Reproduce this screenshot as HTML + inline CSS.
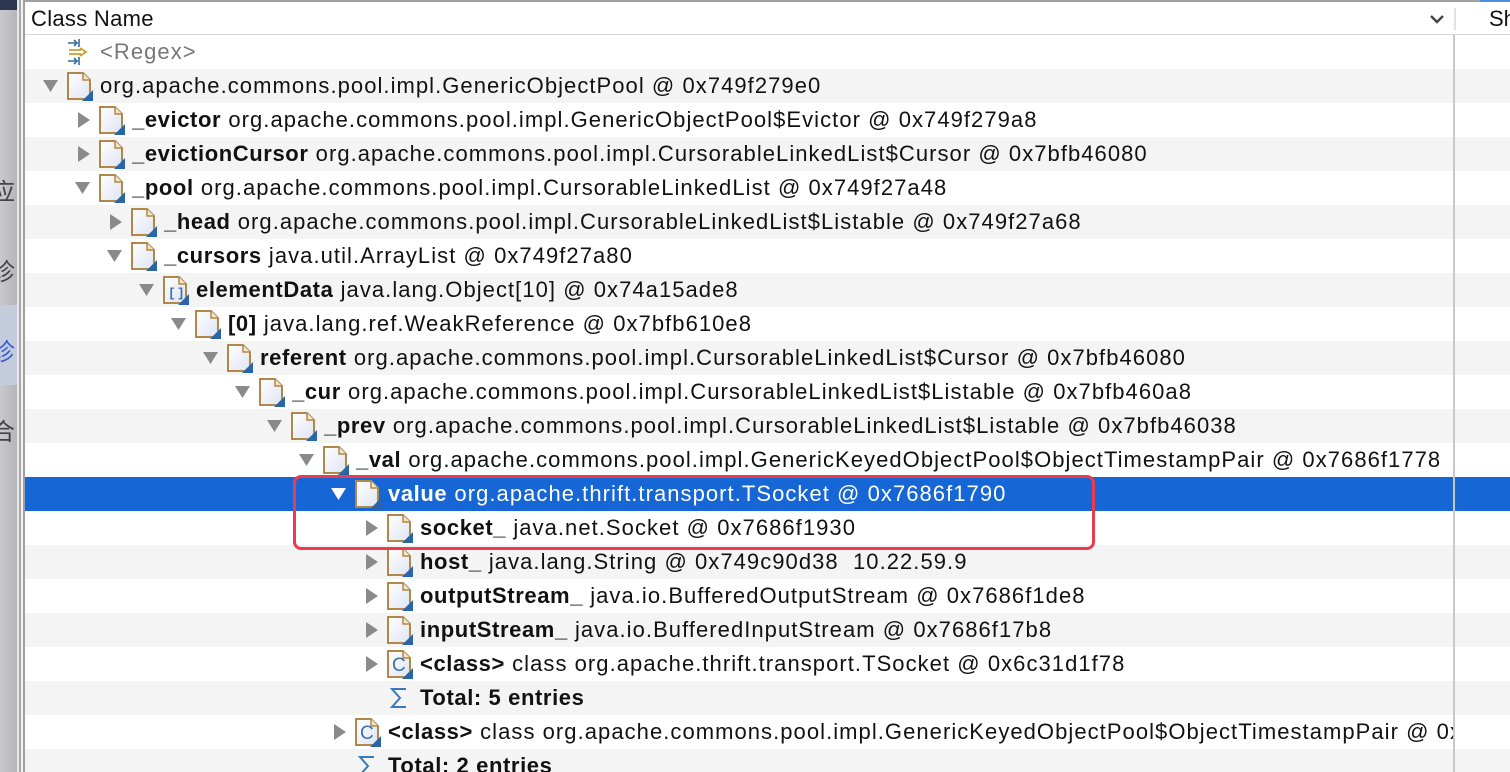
<!DOCTYPE html>
<html><head><meta charset="utf-8">
<style>
*{margin:0;padding:0;box-sizing:border-box}
html,body{width:1510px;height:772px;overflow:hidden}
body{background:#fff;font-family:"Liberation Sans",Arial,sans-serif;position:relative}
#strip{position:absolute;left:0;top:0;width:17px;height:772px;background:linear-gradient(90deg,#c9c9cd,#b6b6ba);overflow:hidden}
#strip .nav{position:absolute;left:0;top:0;width:17px;height:10px;background:#2b3652}
#strip span{position:absolute;left:-9px;font-size:24px;color:#444;font-family:"Noto Sans CJK SC",sans-serif}
#sep1{position:absolute;left:17px;top:0;width:2px;height:772px;background:#e8e8e8}
#sep2{position:absolute;left:19px;top:0;width:2px;height:772px;background:#a8a8a8}
#sep3{position:absolute;left:21px;top:0;width:2px;height:772px;background:#f2f2f2}
#sep4{position:absolute;left:23px;top:0;width:2px;height:772px;background:#a0a0a0}
#topline{position:absolute;left:25px;top:0;width:1485px;height:2px;background:#a0a0a0}
#header{position:absolute;left:25px;top:2px;width:1485px;height:33px;background:#fff;border-bottom:1px solid #d6d6d6}
#header .t{position:absolute;left:6px;top:4px;font-size:22px;letter-spacing:0.3px;color:#111}
#header .sh{position:absolute;left:1464px;top:4px;font-size:22px;color:#111}
#header .dv{position:absolute;left:1429px;top:6px;width:2px;height:22px;background:#e2e2e2}
.row{position:absolute;left:25px;width:1485px;height:34px;font-size:22px;letter-spacing:1.05px;line-height:34px;white-space:nowrap;color:#111;overflow:hidden}
.row.g{background:#f4f4f4}
.row.sel{background:#1766d6;color:#fff}
.row b{font-weight:bold;letter-spacing:0.6px}
.tri{position:absolute;top:0}
.ic{position:absolute;top:2px}
.tx{position:absolute;top:0;overflow:hidden}
#coldiv{position:absolute;left:1453px;top:35px;width:2px;height:737px;background:#c8c8c8}
#box{position:absolute;left:293px;top:475px;width:802px;height:75px;border:3px solid #ea3b4f;border-radius:8px}
</style></head><body>
<div id="strip"><div class="nav"></div>
<span style="top:172px">应</span><span style="top:252px">诊</span>
<div style="position:absolute;left:0;top:305px;width:17px;height:80px;background:#c4ccdc"></div>
<span style="top:332px;color:#3a5bd8">诊</span><span style="top:412px">合</span></div>
<div id="sep1"></div><div id="sep2"></div><div id="sep3"></div><div id="sep4"></div>
<div id="topline"></div>
<div style="position:absolute;left:1480px;top:0;width:30px;height:2px;background:#4a90e2"></div>
<div id="header"><div class="t">Class Name</div>
<svg style="position:absolute;left:1404px;top:12px" width="16" height="10"><path d="M2 2 L8 8 L14 2" stroke="#444" stroke-width="2.4" fill="none"/></svg>
<div class="dv"></div><div class="sh">Sh</div></div>
<div id="rows"></div>
<div id="coldiv"></div>
<div id="box"></div>
<script>
var D=[
[-1,'regex','','<span style="color:#777">&lt;Regex&gt;</span>'],
[0,'d','doc','org.apache.commons.pool.impl.GenericObjectPool @ 0x749f279e0'],
[1,'r','doc','<b>_evictor</b> org.apache.commons.pool.impl.GenericObjectPool$Evictor @ 0x749f279a8'],
[1,'r','doc','<b>_evictionCursor</b> org.apache.commons.pool.impl.CursorableLinkedList$Cursor @ 0x7bfb46080'],
[1,'d','doc','<b>_pool</b> org.apache.commons.pool.impl.CursorableLinkedList @ 0x749f27a48'],
[2,'r','doc','<b>_head</b> org.apache.commons.pool.impl.CursorableLinkedList$Listable @ 0x749f27a68'],
[2,'d','doc','<b>_cursors</b> java.util.ArrayList @ 0x749f27a80'],
[3,'d','arr','<b>elementData</b> java.lang.Object[10] @ 0x74a15ade8'],
[4,'d','doc','<b>[0]</b> java.lang.ref.WeakReference @ 0x7bfb610e8'],
[5,'d','doc','<b>referent</b> org.apache.commons.pool.impl.CursorableLinkedList$Cursor @ 0x7bfb46080'],
[6,'d','doc','<b>_cur</b> org.apache.commons.pool.impl.CursorableLinkedList$Listable @ 0x7bfb460a8'],
[7,'d','doc','<b>_prev</b> org.apache.commons.pool.impl.CursorableLinkedList$Listable @ 0x7bfb46038'],
[8,'d','doc','<b>_val</b> org.apache.commons.pool.impl.GenericKeyedObjectPool$ObjectTimestampPair @ 0x7686f1778'],
[9,'d','doc','<b>value</b> org.apache.thrift.transport.TSocket @ 0x7686f1790'],
[10,'r','doc','<b>socket_</b> java.net.Socket @ 0x7686f1930'],
[10,'r','doc','<b>host_</b> java.lang.String @ 0x749c90d38&nbsp; 10.22.59.9'],
[10,'r','doc','<b>outputStream_</b> java.io.BufferedOutputStream @ 0x7686f1de8'],
[10,'r','doc','<b>inputStream_</b> java.io.BufferedInputStream @ 0x7686f17b8'],
[10,'r','cls','<b>&lt;class&gt;</b> class org.apache.thrift.transport.TSocket @ 0x6c31d1f78'],
[10,'','sum','<b>Total: 5 entries</b>'],
[9,'r','cls','<b>&lt;class&gt;</b> class org.apache.commons.pool.impl.GenericKeyedObjectPool$ObjectTimestampPair @ 0x6'],
[9,'','sum','<b>Total: 2 entries</b>']];
function icon(t){
 if(t=='sum')return '<svg width="26" height="30"><path d="M20 6 L6 6 L14 15 L6 24 L20 24" stroke="#3b78b8" stroke-width="2" fill="none"/></svg>';
 var s='<svg width="27" height="30"><defs><linearGradient id="g" x1="0" y1="0" x2="1" y2="1"><stop offset="0" stop-color="#fff"/><stop offset="1" stop-color="#dde4f2"/></linearGradient></defs><path d="M2 2 L17 2 L24 9 L24 28 L2 28 Z" fill="url(#g)" stroke="#b0894a" stroke-width="2"/><path d="M17 2 L17 9 L24 9" fill="#f4e6c4" stroke="#b0894a" stroke-width="1.5"/><path d="M27 19 L27 30 L16 30 Z" fill="#2a65a8"/>';
 if(t=='arr')s+='<text x="6" y="22" font-size="13" font-weight="bold" fill="#3b6fb0" font-family="Liberation Mono">[]</text>';
 if(t=='cls')s+='<text x="6" y="22" font-size="19" fill="#3b6fb0" font-family="Liberation Sans">C</text>';
 return s+'</svg>';
}
var h='';
D.forEach(function(r,i){
 var L=r[0],top=35+34*i,cls='row'+(i==13?' sel':(i%2?' g':''));
 h+='<div class="'+cls+'" style="top:'+top+'px">';
 if(r[1]=='regex'){
  h+='<svg class="ic" style="left:40px" width="30" height="30"><path d="M3 6 H12 M9 3 L12 6 L9 9 M14 2 V10" stroke="#35689e" stroke-width="1.6" fill="none"/><path d="M3 24 H12 M9 21 L12 24 L9 27 M14 20 V28" stroke="#35689e" stroke-width="1.6" fill="none"/><path d="M4 13 H16 M4 17 H16 M15 11 L21 15 L15 19" stroke="#d09a3a" stroke-width="1.8" fill="none"/></svg>';
  h+='<span class="tx" style="left:75px">'+r[3]+'</span></div>';return;}
 var c=(i==13)?'#fff':'#8a8a8a',tx=18+32*L,lx=75+32*L;
 if(r[1]=='d')h+='<svg class="tri" style="left:'+tx+'px;top:10px" width="16" height="14"><path d="M0 1 L15 1 L7.5 13 Z" fill="'+c+'"/></svg>';
 if(r[1]=='r')h+='<svg class="tri" style="left:'+(tx+2)+'px;top:9px" width="14" height="16"><path d="M1 0 L13 8 L1 16 Z" fill="'+c+'"/></svg>';
 h+='<span class="ic" style="left:'+(41+32*L)+'px">'+icon(r[2])+'</span>';
 h+='<span class="tx" style="left:'+lx+'px;max-width:'+(1428-lx)+'px">'+r[3]+'</span></div>';
});
document.getElementById('rows').innerHTML=h;
</script>
</body></html>
